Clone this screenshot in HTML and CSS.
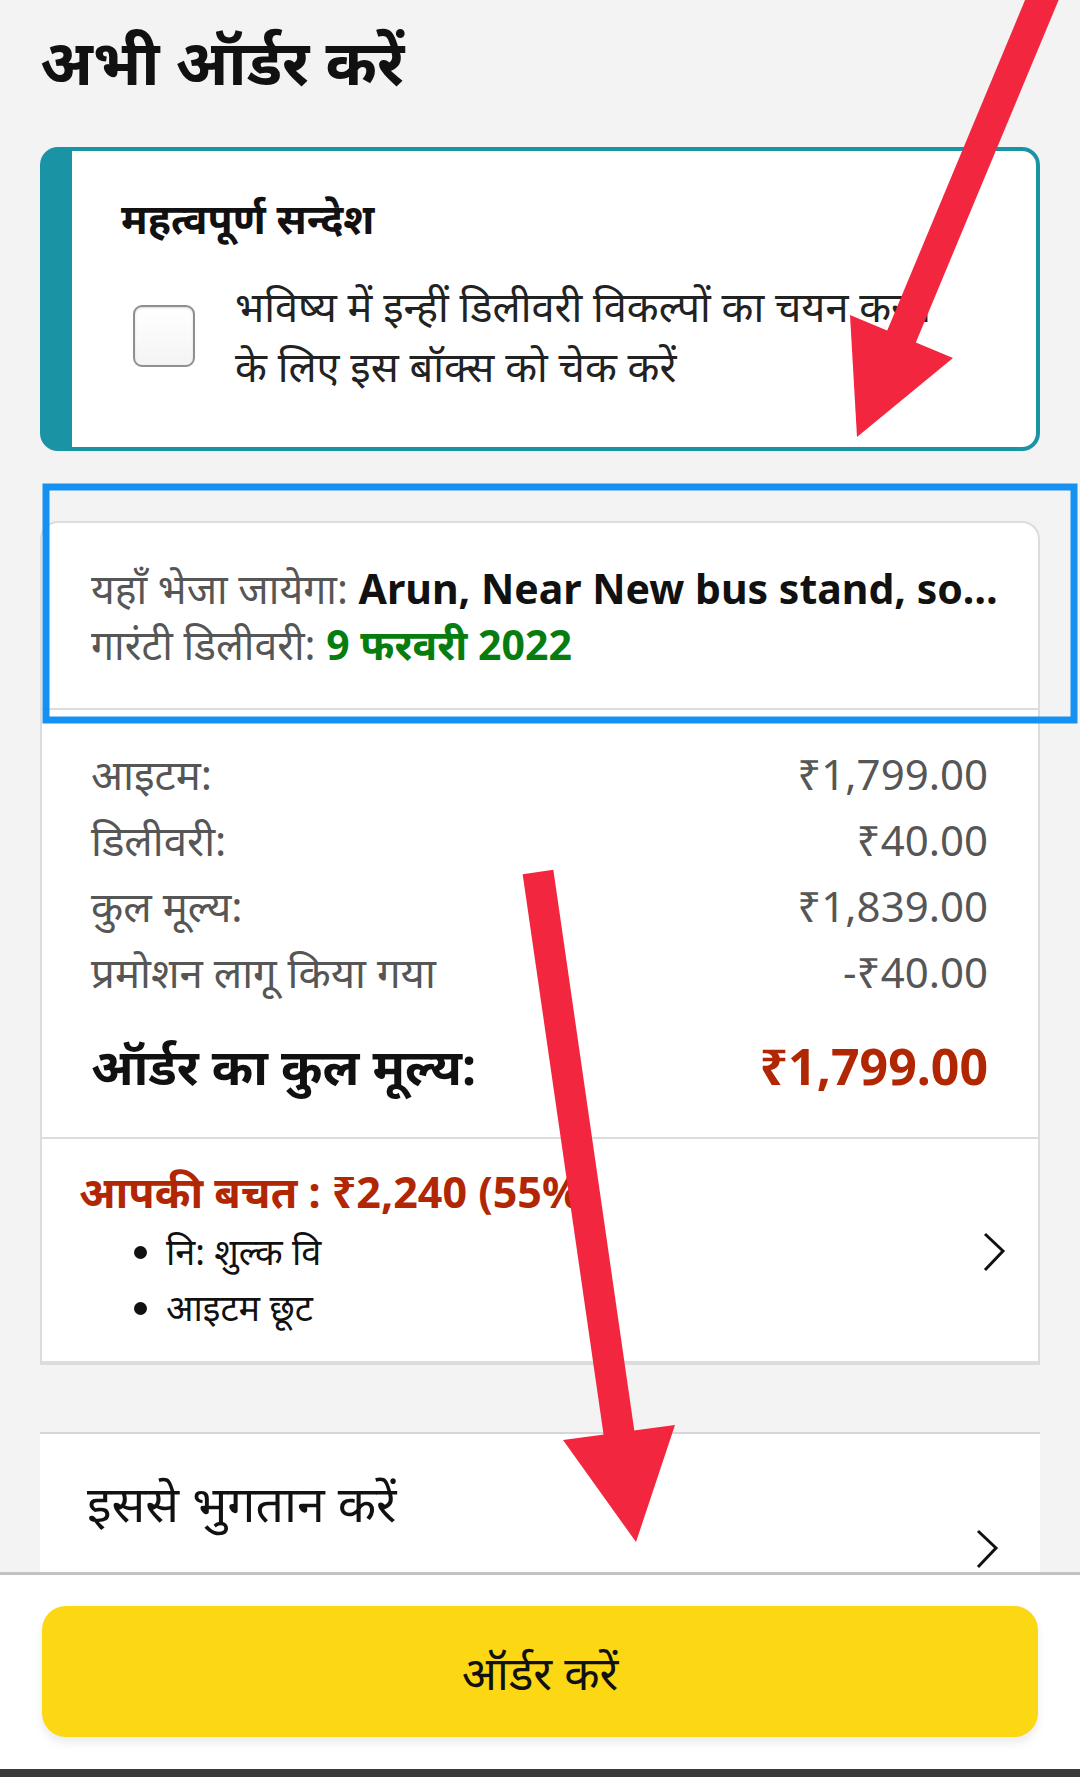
FILE: index.html
```html
<!DOCTYPE html>
<html lang="hi">
<head>
  <meta charset="UTF-8" />
  <meta name="viewport" content="width=device-width, initial-scale=1.0"/>
  <title>अभी ऑर्डर करें</title>
  <link rel="stylesheet" href="styles.css">
</head>
<body>
  <div class="page">
    <h1 class="page-title">अभी ऑर्डर करें</h1>

    <div class="notice">
      <h3>महत्वपूर्ण सन्देश</h3>
      <label class="notice-row">
        <span class="check"></span>
        <span class="notice-text">भविष्य में इन्हीं डिलीवरी विकल्पों का चयन करने<br>के लिए इस बॉक्स को चेक करें</span>
      </label>
    </div>

    <div class="summary">
      <div class="ship">
        <p class="ship-line"><span class="muted">यहाँ भेजा जायेगा:</span> <strong>Arun, Near New bus stand, so…</strong></p>
        <p class="ship-line"><span class="muted">गारंटी डिलीवरी:</span> <strong class="green">9 फरवरी 2022</strong></p>
      </div>

      <div class="prices">
        <div class="price-row"><span>आइटम:</span><span>₹1,799.00</span></div>
        <div class="price-row"><span>डिलीवरी:</span><span>₹40.00</span></div>
        <div class="price-row"><span>कुल मूल्य:</span><span>₹1,839.00</span></div>
        <div class="price-row"><span>प्रमोशन लागू किया गया</span><span>-₹40.00</span></div>
        <div class="total-row"><span>ऑर्डर का कुल मूल्य:</span><span class="total-val">₹1,799.00</span></div>
      </div>

      <div class="savings">
        <div>
          <div class="save-title">आपकी बचत : ₹2,240 (55%)</div>
          <ul class="save-list">
            <li>नि: शुल्क वि</li>
            <li>आइटम छूट</li>
          </ul>
        </div>
        <svg class="chev" width="24" height="40" viewBox="0 0 24 40"><polyline points="3,2 21,19 3,38" fill="none" stroke="#111" stroke-width="3"/></svg>
      </div>
    </div>

    <div class="pay-card">
      <div class="pay-title">इससे भुगतान करें</div>
      <svg class="chev chev-low" width="24" height="40" viewBox="0 0 24 40"><polyline points="3,2 21,19 3,38" fill="none" stroke="#111" stroke-width="3"/></svg>
    </div>
  </div>

  <div class="bottom-sheet">
    <button class="order-btn">ऑर्डर करें</button>
  </div>
  <div class="nav-bar"></div>

  <!-- red arrows and blue box drawn over the screenshot -->
  <svg class="marks" width="1080" height="1777" viewBox="0 0 1080 1777">
    <rect x="46" y="487" width="1028" height="233" fill="none" stroke="#1591f2" stroke-width="7"/>
    <line x1="1046" y1="-10" x2="898" y2="345" stroke="#f3263f" stroke-width="31"/>
    <polygon points="850,315 953,358 857,437" fill="#f3263f"/>
    <line x1="538" y1="872" x2="620" y2="1440" stroke="#f3263f" stroke-width="31"/>
    <polygon points="563,1440 675,1425 636,1542" fill="#f3263f"/>
  </svg>
</body>
</html>
```

FILE: styles.css
```css
body {
  margin: 0;
  background: #f3f3f3;
  font-family: "Noto Sans", "Open Sans", sans-serif;
  color: #111;
}

.page {
  padding: 0 40px;
}

.page-title {
  margin: 0;
  padding: 26px 0 0 0;
  height: 147px;
  box-sizing: border-box;
  font-size: 62px;
  line-height: 70px;
  font-weight: bold;
}

.notice {
  background: #fff;
  border: 4px solid #1a93a5;
  border-left-width: 32px;
  border-radius: 18px;
  padding: 45px 30px 51px 49px;
  height: 304px;
  box-sizing: border-box;
}

.notice h3 {
  margin: 0;
  font-size: 41px;
  line-height: 44px;
  font-weight: bold;
}

.notice-row {
  display: flex;
  align-items: center;
  gap: 40px;
  margin-top: 36px;
  padding-left: 12px;
}

.check {
  flex: none;
  width: 58px;
  height: 58px;
  border: 2px solid #8f8f8f;
  border-radius: 9px;
  background: linear-gradient(#fff, #f4f4f4);
  box-shadow: inset 0 1px 2px rgba(0,0,0,0.15);
}

.notice-text {
  font-size: 41.5px;
  line-height: 60px;
  color: #222;
  white-space: nowrap;
}

.summary {
  margin-top: 70px;
  background: #fff;
  border: 2px solid #dcdcdc;
  border-radius: 18px 18px 0 0;
}

.ship {
  padding: 37px 20px 36px 49px;
  border-bottom: 2px solid #dcdcdc;
}

.ship-line {
  margin: 0;
  font-size: 41px;
  line-height: 56px;
  white-space: nowrap;
  overflow: hidden;
  text-overflow: ellipsis;
}

.muted {
  color: #565656;
}

.green {
  color: #067d0e;
}

.prices {
  padding: 31px 50px 38px 49px;
  border-bottom: 2px solid #dcdcdc;
}

.price-row {
  display: flex;
  justify-content: space-between;
  font-size: 42px;
  line-height: 66px;
  color: #565656;
}

.total-row {
  display: flex;
  justify-content: space-between;
  margin-top: 28px;
  font-size: 50px;
  line-height: 66px;
  font-weight: bold;
}

.total-val {
  color: #b12704;
}

.savings {
  display: flex;
  justify-content: space-between;
  align-items: center;
  padding: 28px 32px 25px 37px;
  border-bottom: 2px solid #dcdcdc;
}

.save-title {
  font-size: 43px;
  line-height: 50px;
  font-weight: bold;
  color: #b12704;
}

.save-list {
  margin: 7px 0 0;
  padding-left: 87px;
  font-size: 36px;
  line-height: 56px;
}

.pay-card {
  margin-top: 67px;
  height: 140px;
  box-sizing: border-box;
  background: #fff;
  border-top: 2px solid #d6d6d6;
  display: flex;
  justify-content: space-between;
  padding: 41px 41px 3px 47px;
}

.pay-title {
  font-size: 50px;
  line-height: 56px;
}

.chev-low {
  align-self: flex-end;
}

.bottom-sheet {
  background: #fff;
  border-top: 3px solid #c2c2c2;
  padding: 31px 42px 32px;
}

.order-btn {
  display: block;
  width: 100%;
  height: 131px;
  border: none;
  border-radius: 24px;
  background: #fcd714;
  font-family: inherit;
  font-size: 46px;
  color: #111;
  box-shadow: 0 6px 10px rgba(0,0,0,0.08);
}

.nav-bar {
  height: 9px;
  background: #3a3a3c;
}

.marks {
  position: absolute;
  top: 0;
  left: 0;
  pointer-events: none;
}
```
